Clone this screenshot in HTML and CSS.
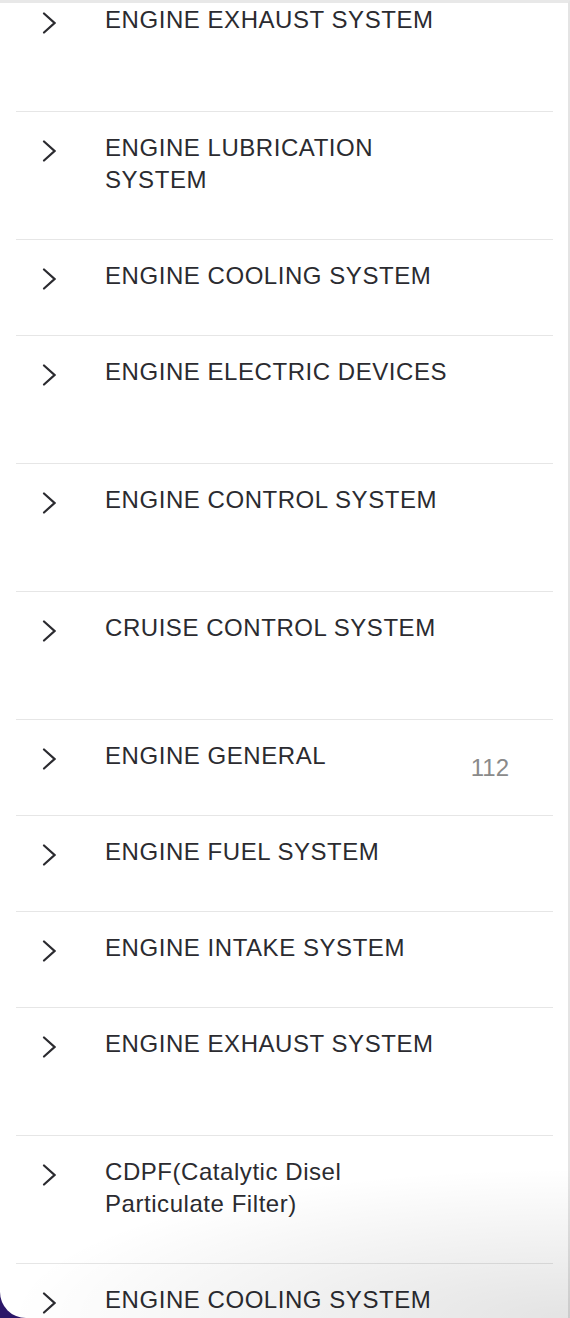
FILE: index.html
```html
<!DOCTYPE html>
<html lang="en">
<head>
<meta charset="utf-8">
<title>Engine sections</title>
<link rel="stylesheet" href="styles.css">
</head>
<body>
<div class="window">
  <div class="panel">
    <ul class="list">
      <li class="row row--tall"><span class="chev"><svg viewBox="0 0 14 22" width="14" height="22"><polyline points="2,1.5 12.5,11 2,20.5"/></svg></span><span class="label">ENGINE EXHAUST SYSTEM</span><span class="count"></span></li>
      <li class="row row--tall"><span class="chev"><svg viewBox="0 0 14 22" width="14" height="22"><polyline points="2,1.5 12.5,11 2,20.5"/></svg></span><span class="label">ENGINE LUBRICATION SYSTEM</span><span class="count"></span></li>
      <li class="row"><span class="chev"><svg viewBox="0 0 14 22" width="14" height="22"><polyline points="2,1.5 12.5,11 2,20.5"/></svg></span><span class="label">ENGINE COOLING SYSTEM</span><span class="count"></span></li>
      <li class="row row--tall"><span class="chev"><svg viewBox="0 0 14 22" width="14" height="22"><polyline points="2,1.5 12.5,11 2,20.5"/></svg></span><span class="label">ENGINE ELECTRIC DEVICES</span><span class="count"></span></li>
      <li class="row row--tall"><span class="chev"><svg viewBox="0 0 14 22" width="14" height="22"><polyline points="2,1.5 12.5,11 2,20.5"/></svg></span><span class="label">ENGINE CONTROL SYSTEM</span><span class="count"></span></li>
      <li class="row row--tall"><span class="chev"><svg viewBox="0 0 14 22" width="14" height="22"><polyline points="2,1.5 12.5,11 2,20.5"/></svg></span><span class="label">CRUISE CONTROL SYSTEM</span><span class="count"></span></li>
      <li class="row"><span class="chev"><svg viewBox="0 0 14 22" width="14" height="22"><polyline points="2,1.5 12.5,11 2,20.5"/></svg></span><span class="label">ENGINE GENERAL</span><span class="count">112</span></li>
      <li class="row"><span class="chev"><svg viewBox="0 0 14 22" width="14" height="22"><polyline points="2,1.5 12.5,11 2,20.5"/></svg></span><span class="label">ENGINE FUEL SYSTEM</span><span class="count"></span></li>
      <li class="row"><span class="chev"><svg viewBox="0 0 14 22" width="14" height="22"><polyline points="2,1.5 12.5,11 2,20.5"/></svg></span><span class="label">ENGINE INTAKE SYSTEM</span><span class="count"></span></li>
      <li class="row row--tall"><span class="chev"><svg viewBox="0 0 14 22" width="14" height="22"><polyline points="2,1.5 12.5,11 2,20.5"/></svg></span><span class="label">ENGINE EXHAUST SYSTEM</span><span class="count"></span></li>
      <li class="row row--tall"><span class="chev"><svg viewBox="0 0 14 22" width="14" height="22"><polyline points="2,1.5 12.5,11 2,20.5"/></svg></span><span class="label">CDPF(Catalytic Disel Particulate Filter)</span><span class="count"></span></li>
      <li class="row"><span class="chev"><svg viewBox="0 0 14 22" width="14" height="22"><polyline points="2,1.5 12.5,11 2,20.5"/></svg></span><span class="label">ENGINE COOLING SYSTEM</span><span class="count"></span></li>
    </ul>
  </div>
  <div class="shade"></div>
</div>
</body>
</html>
```
FILE: styles.css
```css
* { box-sizing: border-box; }
html, body {
  margin: 0;
  padding: 0;
  height: 1318px;
  overflow: hidden;
  background: #2c1768;
}
.window {
  position: relative;
  width: 570px;
  height: 1318px;
  overflow: hidden;
  background: #ffffff;
  border-bottom-left-radius: 26px;
}
.panel {
  height: 1318px;
  overflow: hidden;
  border-top: 3px solid #e8e8e8;
  border-right: 2px solid #e4e4e4;
}
.list {
  list-style: none;
  margin: -19px 0 0 16px;
  padding: 0;
  width: 537px;
}
.row {
  display: flex;
  align-items: flex-start;
  height: 96px;
  padding-top: 20px;
  border-bottom: 1px solid #e6e6e6;
  font-family: "Liberation Sans", Arial, sans-serif;
  font-size: 24px;
  line-height: 32px;
  color: #2b2b30;
  letter-spacing: 0.55px;
}
.row--tall { height: 128px; }
.chev {
  width: 89px;
  padding-left: 26px;
  height: 32px;
  display: flex;
  align-items: center;
  padding-top: 6px;
}
.chev svg polyline {
  fill: none;
  stroke: #2b2b30;
  stroke-width: 2.2;
  stroke-linecap: round;
  stroke-linejoin: miter;
}
.label {
  width: 352px;
}
.count {
  flex: 1;
  text-align: right;
  padding-right: 44px;
  color: #8a8a8a;
  align-self: center;
  margin-top: -20px;
  letter-spacing: 0;
}
.shade {
  position: absolute;
  left: 0;
  right: 0;
  bottom: 0;
  height: 160px;
  pointer-events: none;
  background: radial-gradient(ellipse 560px 150px at 100% 100%, rgba(0,0,0,0.11), rgba(0,0,0,0) 100%);
}
```
